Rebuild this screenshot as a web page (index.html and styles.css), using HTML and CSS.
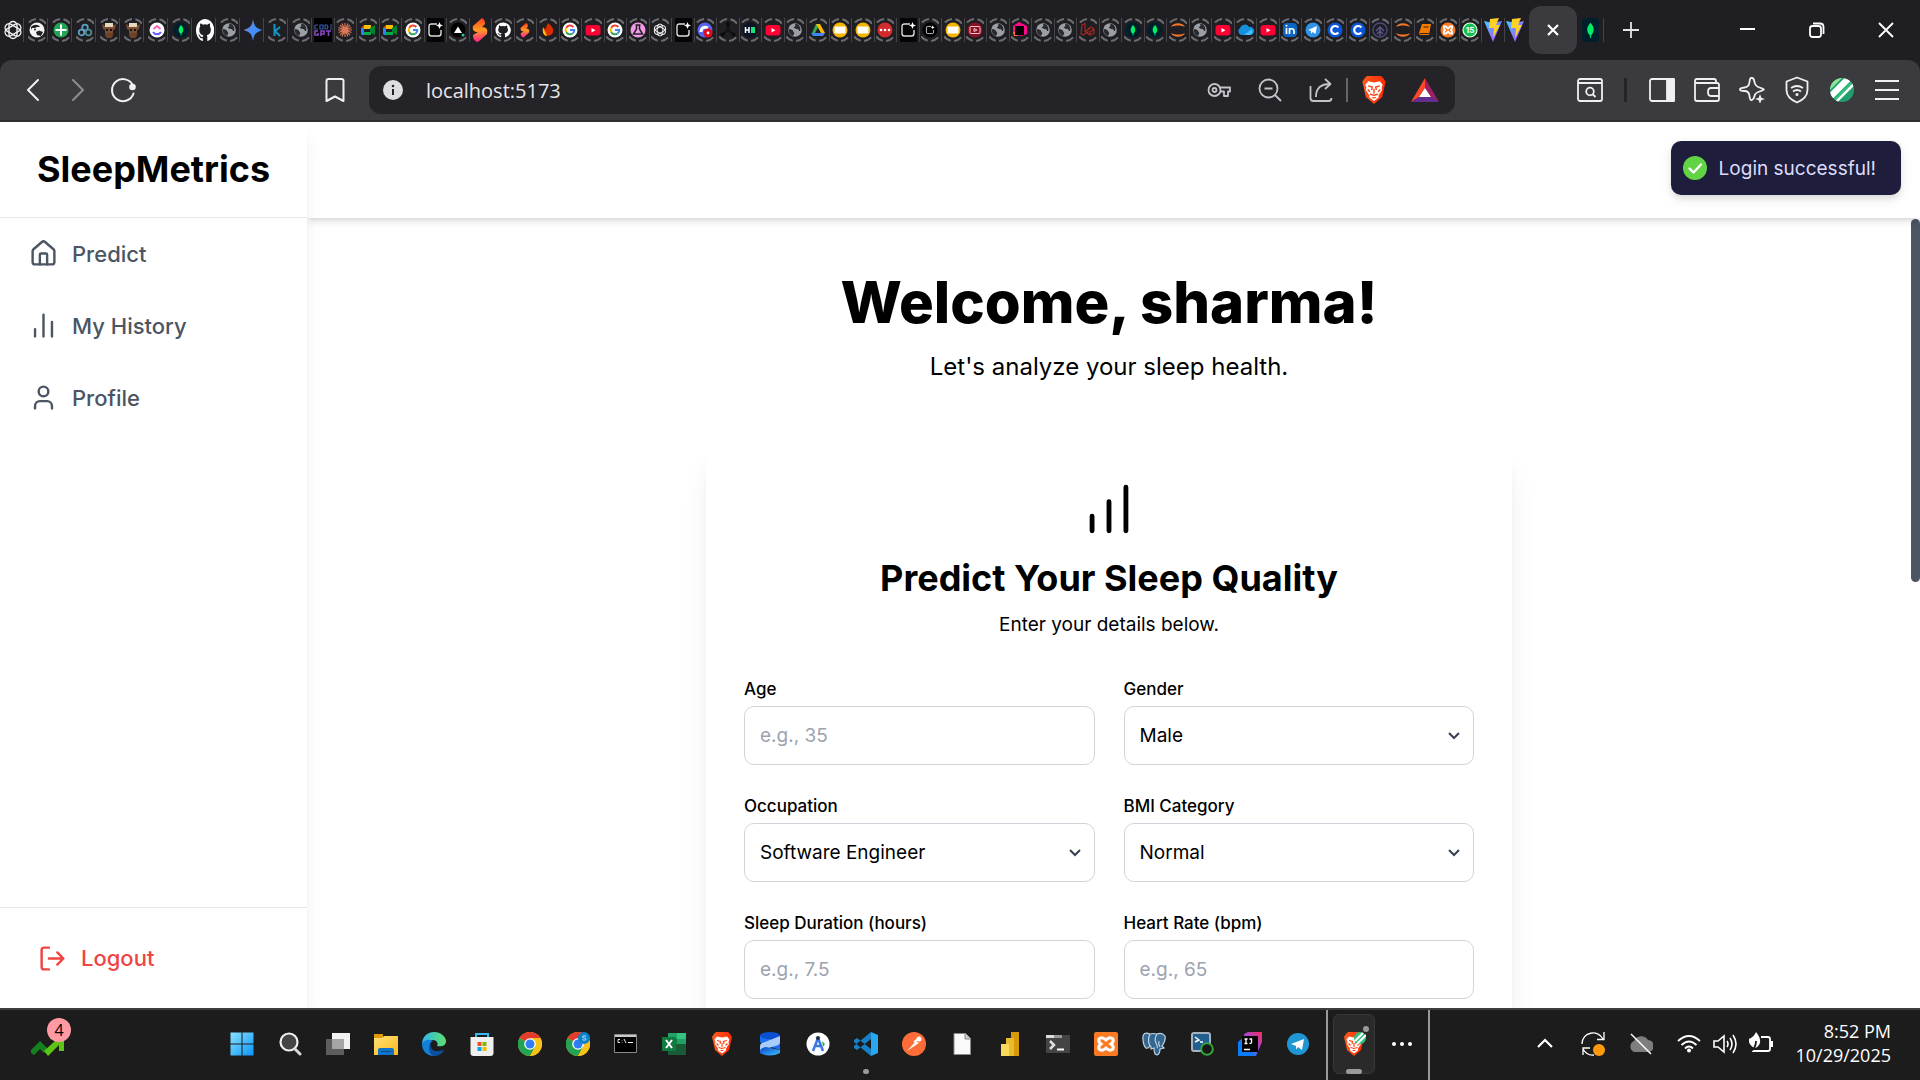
FILE: index.html
```html
<!DOCTYPE html>
<html lang="en">
<head>
<meta charset="utf-8">
<meta name="viewport" content="width=device-width, initial-scale=1">
<title>SleepMetrics</title>
<link rel="stylesheet" href="styles.css">
</head>
<body>
<!-- Shared favicon shapes, drawn around the centre (9,12) -->
<svg class="sprite" aria-hidden="true">
  <defs>
    <linearGradient id="hot" x1="0" y1="0" x2="0" y2="1"><stop offset="0" stop-color="#ff3d1f"/><stop offset=".5" stop-color="#ff9a1f"/><stop offset="1" stop-color="#ff1f8f"/></linearGradient>
    <linearGradient id="gem" x1="0" y1="0" x2="1" y2="1"><stop offset="0" stop-color="#f04a3c"/><stop offset=".4" stop-color="#4c8df6"/><stop offset=".7" stop-color="#3f8cf5"/><stop offset="1" stop-color="#25b35a"/></linearGradient>
    <linearGradient id="viteg" x1="0" y1="0" x2="1" y2="1"><stop offset="0" stop-color="#41d1ff"/><stop offset="1" stop-color="#bd34fe"/></linearGradient>
    <linearGradient id="lion" x1="0" y1="0" x2="1" y2="0"><stop offset="0" stop-color="#ff5a1f"/><stop offset="1" stop-color="#ff2a00"/></linearGradient>
    <linearGradient id="win" x1="0" y1="0" x2="1" y2="1"><stop offset="0" stop-color="#8be3ff"/><stop offset="1" stop-color="#0a94f7"/></linearGradient>
    <linearGradient id="fold" x1="0" y1="0" x2="1" y2="1"><stop offset="0" stop-color="#ffe07a"/><stop offset="1" stop-color="#fbb917"/></linearGradient>
    <linearGradient id="edg" x1="0" y1="0" x2="1" y2="0"><stop offset="0" stop-color="#2cb8f0"/><stop offset="1" stop-color="#5fe06a"/></linearGradient>
    <linearGradient id="jb" x1="0" y1="1" x2="1" y2="0"><stop offset=".3" stop-color="#087cfa"/><stop offset=".6" stop-color="#a04ad0"/><stop offset="1" stop-color="#fe2857"/></linearGradient>
    <linearGradient id="dbg" x1="0" y1="0" x2="1" y2="1"><stop offset="0" stop-color="#0a45c9"/><stop offset="1" stop-color="#3fc0ff"/></linearGradient>

    <circle id="ring" cx="9" cy="12" r="11" fill="none" stroke="#6d6d70" stroke-width="2" stroke-dasharray="8 3.5" stroke-dashoffset="15"/>
    <g id="knot" fill="none" stroke="#f2f2f2" stroke-width="1.400"><rect x="5" y="3.500" width="8" height="17" rx="4"/><rect x="5" y="3.500" width="8" height="17" rx="4" transform="rotate(60 9 12)"/><rect x="5" y="3.500" width="8" height="17" rx="4" transform="rotate(120 9 12)"/></g>
    <path id="cat" d="M9 0C4 0 0 4 0 9c0 4 2.600 7.400 6.200 8.600.4.100.6-.2.600-.5v-1.700c-2.500.5-3.100-1.100-3.100-1.100-.4-1-1-1.300-1-1.300-.8-.6.100-.6.100-.6.900.1 1.400.9 1.400.9.800 1.400 2.100 1 2.600.8.100-.6.300-1 .6-1.200-2-.2-4.100-1-4.100-4.500 0-1 .4-1.800.9-2.400-.1-.3-.4-1.200.1-2.400 0 0 .8-.3 2.500.9a8.600 8.600 0 0 1 4.500 0c1.700-1.200 2.500-.9 2.500-.9.500 1.200.2 2.100.1 2.400.6.600.9 1.400.9 2.400 0 3.500-2.100 4.200-4.100 4.500.3.300.6.800.6 1.700v2.500c0 .3.200.6.600.5A9 9 0 0 0 9 0z" fill="#fff"/>
    <path id="leaf" d="M0-6C3-3 4 1 .5 4.500V6.500h-1V4.500C-4 1-3-3 0-6z" fill="#00ed64"/>
    <g id="t-openai"><use href="#knot"/></g>
    <g id="t-openai2"><use href="#ring"/><g transform="translate(2.700 3.600) scale(.7)"><use href="#knot"/></g></g>
    <g id="t-beard"><use href="#ring"/><circle cx="9" cy="12" r="7.500" fill="#f4f4f4"/><path d="M3 9c3-3 7-3 9 0l-3 0-2 1-3 0-1 2zM8 14l3-1.500 4 1.500-2 4-4-1z" fill="#222"/><circle cx="7" cy="11.500" r="1" fill="#222"/></g>
    <g id="t-sheet"><use href="#ring"/><circle cx="9" cy="12" r="7.500" fill="#23a455"/><path d="M9 6.500v11M3.500 12h11" stroke="#fff" stroke-width="2"/></g>
    <g id="t-tref"><use href="#ring"/><g fill="none" stroke="#5f9fc0" stroke-width="1.800"><circle cx="9" cy="9.500" r="2.800"/><circle cx="5.500" cy="14.500" r="2.800"/><circle cx="12.500" cy="14.500" r="2.800" stroke="#4d8b93"/></g></g>
    <g id="t-bull"><use href="#ring"/><path d="M2 6l4 2h6l4-2-1 5-2 1v5l-2 3H7l-2-3v-5l-2-1z" fill="#7a4f32"/><path d="M5 5h8v4H5z" fill="#e8d9be"/><path d="M5 15h8v3l-4 2-4-2z" fill="#6b4128"/><path d="M6 11h2v2H6zM10 11h2v2h-2z" fill="#1b1410"/></g>
    <g id="t-click"><use href="#ring"/><circle cx="9" cy="12" r="7.500" fill="#fff"/><path d="M5.500 11L9 8l3.500 3" fill="none" stroke="#ff5fab" stroke-width="2"/><path d="M5 14c2 3 6 3 8 0" fill="none" stroke="#6a5cff" stroke-width="2"/></g>
    <g id="t-mongo"><use href="#ring"/><circle cx="9" cy="12" r="7.500" fill="#001e2b"/><use href="#leaf" transform="translate(9 12) scale(.85)"/></g>
    <g id="t-github"><g transform="translate(0 1) scale(1 1.250)"><use href="#cat"/></g></g>
    <g id="t-github2"><use href="#ring"/><g transform="translate(1.500 4.500) scale(.84)"><use href="#cat"/></g></g>
    <g id="t-globe"><use href="#ring"/><circle cx="9" cy="12" r="6.800" fill="#9aa0a6"/><path d="M3 11c2 0 4 1 4 2s2 1 1 3l-1 2c-3-1-5-4-4-7zM9 6c1 1 0 3-1 3s1 2 3 2 1 2 3 2c1-2 0-6-3-7z" fill="#2b2a2f"/></g>
    <path id="t-gem" d="M9 1c1 7 3 9 9.500 11C12 14 10 16 9 23 8 16 6 14-.5 12 6 10 8 8 9 1z" fill="url(#gem)"/>
    <g id="t-k"><use href="#ring"/><path d="M6.500 6v12M12 9l-5 4 5 5" fill="none" stroke="#1496c4" stroke-width="2"/></g>
    <g id="t-gpt"><path d="M0 0h18v24H0z" fill="#000"/><path d="M1 7h3M1 7v4h3M6 7h3v4H6zM11 7h2l1 2-1 2h-2zM16 7h2M16 9h2M16 11h2" fill="none" stroke="#3a5aa5" stroke-width="1.200"/><path d="M4 13H1v4h3v-2M7 18v-5h3v3H7M12 13h5M14.500 13v5" fill="none" stroke="#8b45c4" stroke-width="1.600"/></g>
    <g id="t-claude"><use href="#ring"/><path d="M9 5v14M2 12h14M4 7l10 10M14 7L4 17M6 5.500l6 13M12 5.500l-6 13M2.500 9.500l13 5M15.500 9.500l-13 5" stroke="#d97757" stroke-width="1.200"/></g>
    <g id="t-meet"><use href="#ring"/><path d="M5 7h7v4H5z" fill="#fbbc04"/><path d="M2 10l3-3v4H2z" fill="#ea4335"/><path d="M2 10h3v7H3l-1-1z" fill="#2684fc"/><path d="M5 14h7v3H5z" fill="#00ac47"/><path d="M11 10l5-3v10l-5-3z" fill="#00832d"/></g>
    <g id="t-google"><use href="#ring"/><circle cx="9" cy="12" r="7.500" fill="#fff"/><g fill="none" stroke-width="2"><path d="M5.300 9.800A4.300 4.300 0 0 1 12.300 9" stroke="#ea4335"/><path d="M5.300 14.200a4.300 4.300 0 0 1 0-4.400" stroke="#fbbc05"/><path d="M5.300 14.200a4.300 4.300 0 0 0 6.300 1.300" stroke="#34a853"/><path d="M9 12h4.300a4 4 0 0 1-1.700 3.500" stroke="#4285f4"/></g></g>
    <g id="spark"><path d="M11 6H5.500Q3 6 3 8.500v7Q3 18 5.500 18h7q2.500 0 2.500-2.500V12" fill="none" stroke="#ddd" stroke-width="1.400"/><path d="M13.500 4l1 2.500L17 7.500l-2.500 1-1 2.500-1-2.500-2.500-1 2.500-1z" fill="#fff"/></g>
    <g id="t-spark"><path d="M1 0h17v24H1z" fill="#050505"/><use href="#spark"/></g>
    <g id="t-spark2"><use href="#ring"/><circle cx="9" cy="12" r="7.500" fill="#000"/><g transform="translate(3.600 4.800) scale(.6)"><use href="#spark"/></g></g>
    <g id="t-vercel"><use href="#ring"/><circle cx="9" cy="12" r="7.500" fill="#000"/><path d="M9 8.500l4 6.500H5z" fill="#fff"/><circle cx="14" cy="17" r="1.500" fill="#2bc4a0"/></g>
    <path id="t-s" d="M11 0L2 8c-1 4 1 6 5 6l-5 3c0 4 2 7 5 7l9-8c1-4 0-7-5-7l3-3c0-3-1-5-3-6z" fill="url(#hot)"/>
    <g id="t-s2"><use href="#ring"/><g transform="translate(3.500 5) scale(.6)"><use href="#t-s"/></g></g>
    <g id="t-flame"><use href="#ring"/><path d="M9 5c4 3 6 6 5 9-1 5-9 5-10 0 0-2 0-3 1-4l2 1c0-2 1-4 2-6z" fill="#dd2c00"/><path d="M4 9l4 9c-3 0-5-3-4-9z" fill="#ffc400"/></g>
    <g id="t-yt"><use href="#ring"/><rect x="1.500" y="7" width="15" height="10.500" rx="3" fill="#ff0033"/><path d="M7.500 10l4 2.200-4 2.300z" fill="#fff"/></g>
    <g id="t-flask"><use href="#ring"/><circle cx="9" cy="12" r="7.500" fill="#f59ae8"/><path d="M6.500 7h5M7.500 7v4L4.500 16h9l-3-5V7" fill="none" stroke="#222" stroke-width="1.500"/></g>
    <g id="t-disc"><use href="#ring"/><circle cx="9" cy="12" r="7.500" fill="#5865f2"/><path d="M5 14c0-4 3-6 7-4" fill="none" stroke="#fff" stroke-width="3"/><circle cx="12" cy="15" r="4.500" fill="#e00b1c"/><circle cx="12" cy="15" r="1.400" fill="#fff"/></g>
    <g id="t-net"><use href="#ring"/><path d="M9 5v7L3 17M9 12l6 5" stroke="#0b0b0c" fill="none" stroke-width="1.500"/><circle cx="9" cy="6" r="2" fill="#0b0b0c"/><circle cx="3.500" cy="16.500" r="2" fill="#0b0b0c"/><circle cx="14.500" cy="16.500" r="2" fill="#0b0b0c"/></g>
    <g id="t-he"><use href="#ring"/><circle cx="9" cy="12" r="7.500" fill="#0a1428"/><path d="M4.500 9v6M8 9v6M4 12h4" stroke="#fff" stroke-width="1.500"/><path d="M10 9h4v6h-4z" fill="#1be27a"/></g>
    <g id="t-drive"><use href="#ring"/><path d="M7 6h4l-5 9-3 0z" fill="#34a853"/><path d="M7 6h4l5 9h-4z" fill="#fbbc04"/><path d="M2 15h14l-2 3H4z" fill="#4285f4"/></g>
    <g id="t-slides"><use href="#ring"/><circle cx="9" cy="12" r="7.500" fill="#f4b400"/><rect x="3.500" y="8.500" width="11" height="7" rx="1" fill="#fff"/></g>
    <g id="t-dots"><use href="#ring"/><circle cx="9" cy="12" r="7.500" fill="#d32b2b"/><circle cx="5" cy="12" r="1.300" fill="#fff"/><circle cx="9" cy="12" r="1.300" fill="#fff"/><circle cx="13" cy="12" r="1.300" fill="#fff"/></g>
    <g id="t-rplay"><use href="#ring"/><circle cx="9" cy="12" r="7.500" fill="#8c0f24"/><rect x="4" y="8.500" width="10" height="7" rx="1" fill="none" stroke="#f5c9cf"/><path d="M8 10.500l3 1.500-3 1.500z" fill="none" stroke="#f5c9cf"/></g>
    <g id="t-jb"><use href="#ring"/><path d="M2 8l6-4 8 4v8l-6 2-8-2z" fill="#ff0a8a"/><path d="M2 14h5v4H3z" fill="#ff6a2b"/><path d="M4 8h9v9H4z" fill="#000"/></g>
    <g id="t-laravel"><use href="#ring"/><path d="M3 7l3-1.500v8L11 17l4-2v-4l-3-2-3 2v3l-5 3-2-1zM6 13.500l5-3M11 17v-3l4-3" fill="none" stroke="#a8261f" stroke-width="1.200"/></g>
    <g id="t-jup"><use href="#ring"/><path d="M2 9c2-5 12-5 14 0-4-2-10-2-14 0zM2 15c2 5 12 5 14 0-4 2-10 2-14 0z" fill="#f37726"/></g>
    <g id="t-cloud"><use href="#ring"/><path d="M5 17a4 4 0 0 1-1-7 5 5 0 0 1 9-1 4 4 0 0 1 2 8z" fill="#1490df"/><path d="M8 17l8-6c1 3 0 6-3 6z" fill="#48c0ff"/></g>
    <g id="t-in"><use href="#ring"/><rect x="2" y="5" width="14" height="14" rx="4" fill="#0a66c2"/><path d="M5.500 10v6M8.500 16v-6M8.500 13c0-3 4.500-3 4.500 0v3" fill="none" stroke="#fff" stroke-width="1.700"/><circle cx="5.500" cy="7.800" r="1" fill="#fff"/></g>
    <g id="t-tg"><use href="#ring"/><circle cx="9" cy="12" r="7.500" fill="#2f93e8"/><path d="M4 12l9-4-1.500 8-3-2-1.500 2v-3z" fill="#fff"/></g>
    <g id="t-c"><use href="#ring"/><circle cx="9" cy="12" r="7.500" fill="#0a56d6"/><path d="M12.300 9.500a4 4 0 1 0 0 5" fill="none" stroke="#fff" stroke-width="2.200"/></g>
    <g id="t-tree"><use href="#ring"/><circle cx="9" cy="12" r="7" fill="none" stroke="#4a4a7a" stroke-width="1.400"/><path d="M9 18v-9M5 13l4-4 4 4M6 16l3-3 3 3" fill="none" stroke="#58588f" stroke-width="1.400"/></g>
    <g id="t-book"><use href="#ring"/><path d="M6 6h9l-2 11H4L3 15z" fill="#f57c00"/><path d="M7.500 9h5M4 15.500h9" stroke="#3a2208" stroke-width="1.200"/></g>
    <g id="t-xampp"><use href="#ring"/><circle cx="9" cy="12" r="7.500" fill="#fb7a24"/><path d="M5 8.500h2l2 2 2-2h2v2l-1 1.500 1 1.500v2h-2l-2-2-2 2H5v-2L6 12l-1-1.500z" fill="none" stroke="#fff" stroke-width="1.800"/></g>
    <g id="t-wa"><use href="#ring"/><circle cx="9" cy="12" r="7" fill="#10c050" stroke="#e8ffe8" stroke-width="1.200"/><text x="9" y="15" class="mini-num">15</text></g>
    <g id="t-vite"><path d="M0 3l9 2 9-2-9 21z" fill="url(#viteg)"/><path d="M6 1l9-1-3 7h4L9 20l1-10H5z" fill="#ffd028"/></g>
    <g id="shield"><path d="M6 0h12l2 2 2 3-1 4-2 9-7 6-7-6-2-9-1-4 2-3z" fill="url(#lion)"/><path d="M7 4.500l5 1 5-1 2.500 3-1 2.500.5 2-3 4.500 0 2-4 3-4-3 0-2-3-4.500.5-2-1-2.500z" fill="#fff"/><path d="M7 8.500l3.500 1-.5 2.500M17 8.500l-3.500 1 .5 2.500M12 11v4M8.500 15.500l3.500 1 3.500-1M10.500 18.500h3M6.500 11.500l2 2M17.500 11.500l-2 2" fill="none" stroke="#ff4410" stroke-width="1.200"/></g>
    <g id="chrome"><circle cx="12" cy="12" r="12" fill="#fbc116"/><path d="M12 12L1.600 6A12 12 0 0 1 22.400 6z" fill="#e33b2e"/><path d="M12 12L1.600 6A12 12 0 0 0 12 24l5-9z" fill="#23a455"/><path d="M12 6h10.400L17 15z" fill="#fbc116"/><path d="M12 24l5.200-9L22.400 6A12 12 0 0 1 12 24z" fill="#fbc116"/><circle cx="12" cy="12" r="5.800" fill="#fff"/><circle cx="12" cy="12" r="4.500" fill="#2f7df0"/></g>
  </defs>
</svg>

<header class="browser">
  <div class="tabstrip">
    <div class="tabs pinned">
      <button class="tab" aria-label="Tab 1"><svg><use href="#t-openai"/></svg></button>
      <button class="tab" aria-label="Tab 2"><svg><use href="#t-beard"/></svg></button>
      <button class="tab" aria-label="Tab 3"><svg><use href="#t-sheet"/></svg></button>
      <button class="tab" aria-label="Tab 4"><svg><use href="#t-tref"/></svg></button>
      <button class="tab" aria-label="Tab 5"><svg><use href="#t-bull"/></svg></button>
      <button class="tab" aria-label="Tab 6"><svg><use href="#t-bull"/></svg></button>
      <button class="tab" aria-label="Tab 7"><svg><use href="#t-click"/></svg></button>
      <button class="tab" aria-label="Tab 8"><svg><use href="#t-mongo"/></svg></button>
      <button class="tab" aria-label="Tab 9"><svg><use href="#t-github"/></svg></button>
      <button class="tab" aria-label="Tab 10"><svg><use href="#t-globe"/></svg></button>
      <button class="tab" aria-label="Tab 11"><svg><use href="#t-gem"/></svg></button>
      <button class="tab" aria-label="Tab 12"><svg><use href="#t-k"/></svg></button>
      <button class="tab" aria-label="Tab 13"><svg><use href="#t-globe"/></svg></button>
    </div>
    <div class="tabs fluid">
      <button class="tab" aria-label="Tab 14"><svg><use href="#t-gpt"/></svg></button>
      <button class="tab" aria-label="Tab 15"><svg><use href="#t-claude"/></svg></button>
      <button class="tab" aria-label="Tab 16"><svg><use href="#t-meet"/></svg></button>
      <button class="tab" aria-label="Tab 17"><svg><use href="#t-meet"/></svg></button>
      <button class="tab" aria-label="Tab 18"><svg><use href="#t-google"/></svg></button>
      <button class="tab" aria-label="Tab 19"><svg><use href="#t-spark"/></svg></button>
      <button class="tab" aria-label="Tab 20"><svg><use href="#t-vercel"/></svg></button>
      <button class="tab" aria-label="Tab 21"><svg><use href="#t-s"/></svg></button>
      <button class="tab" aria-label="Tab 22"><svg><use href="#t-github2"/></svg></button>
      <button class="tab" aria-label="Tab 23"><svg><use href="#t-s2"/></svg></button>
      <button class="tab" aria-label="Tab 24"><svg><use href="#t-flame"/></svg></button>
      <button class="tab" aria-label="Tab 25"><svg><use href="#t-google"/></svg></button>
      <button class="tab" aria-label="Tab 26"><svg><use href="#t-yt"/></svg></button>
      <button class="tab" aria-label="Tab 27"><svg><use href="#t-google"/></svg></button>
      <button class="tab" aria-label="Tab 28"><svg><use href="#t-flask"/></svg></button>
      <button class="tab" aria-label="Tab 29"><svg><use href="#t-openai2"/></svg></button>
      <button class="tab" aria-label="Tab 30"><svg><use href="#t-spark"/></svg></button>
      <button class="tab" aria-label="Tab 31"><svg><use href="#t-disc"/></svg></button>
      <button class="tab" aria-label="Tab 32"><svg><use href="#t-net"/></svg></button>
      <button class="tab" aria-label="Tab 33"><svg><use href="#t-he"/></svg></button>
      <button class="tab" aria-label="Tab 34"><svg><use href="#t-yt"/></svg></button>
      <button class="tab" aria-label="Tab 35"><svg><use href="#t-globe"/></svg></button>
      <button class="tab" aria-label="Tab 36"><svg><use href="#t-drive"/></svg></button>
      <button class="tab" aria-label="Tab 37"><svg><use href="#t-slides"/></svg></button>
      <button class="tab" aria-label="Tab 38"><svg><use href="#t-slides"/></svg></button>
      <button class="tab" aria-label="Tab 39"><svg><use href="#t-dots"/></svg></button>
      <button class="tab" aria-label="Tab 40"><svg><use href="#t-spark"/></svg></button>
      <button class="tab" aria-label="Tab 41"><svg><use href="#t-spark2"/></svg></button>
      <button class="tab" aria-label="Tab 42"><svg><use href="#t-slides"/></svg></button>
      <button class="tab" aria-label="Tab 43"><svg><use href="#t-rplay"/></svg></button>
      <button class="tab" aria-label="Tab 44"><svg><use href="#t-globe"/></svg></button>
      <button class="tab" aria-label="Tab 45"><svg><use href="#t-jb"/></svg></button>
      <button class="tab" aria-label="Tab 46"><svg><use href="#t-globe"/></svg></button>
      <button class="tab" aria-label="Tab 47"><svg><use href="#t-globe"/></svg></button>
      <button class="tab" aria-label="Tab 48"><svg><use href="#t-laravel"/></svg></button>
      <button class="tab" aria-label="Tab 49"><svg><use href="#t-globe"/></svg></button>
      <button class="tab" aria-label="Tab 50"><svg><use href="#t-mongo"/></svg></button>
      <button class="tab" aria-label="Tab 51"><svg><use href="#t-mongo"/></svg></button>
      <button class="tab" aria-label="Tab 52"><svg><use href="#t-jup"/></svg></button>
      <button class="tab" aria-label="Tab 53"><svg><use href="#t-globe"/></svg></button>
      <button class="tab" aria-label="Tab 54"><svg><use href="#t-yt"/></svg></button>
      <button class="tab" aria-label="Tab 55"><svg><use href="#t-cloud"/></svg></button>
      <button class="tab" aria-label="Tab 56"><svg><use href="#t-yt"/></svg></button>
      <button class="tab" aria-label="Tab 57"><svg><use href="#t-in"/></svg></button>
      <button class="tab" aria-label="Tab 58"><svg><use href="#t-tg"/></svg></button>
      <button class="tab" aria-label="Tab 59"><svg><use href="#t-c"/></svg></button>
      <button class="tab" aria-label="Tab 60"><svg><use href="#t-c"/></svg></button>
      <button class="tab" aria-label="Tab 61"><svg><use href="#t-tree"/></svg></button>
      <button class="tab" aria-label="Tab 62"><svg><use href="#t-jup"/></svg></button>
      <button class="tab" aria-label="Tab 63"><svg><use href="#t-book"/></svg></button>
      <button class="tab" aria-label="Tab 64"><svg><use href="#t-xampp"/></svg></button>
      <button class="tab" aria-label="Tab 65"><svg><use href="#t-wa"/></svg></button>
      <button class="tab" aria-label="Tab 66"><svg><use href="#t-vite"/></svg></button>
      <button class="tab last" aria-label="Tab 67"><svg><use href="#t-vite"/></svg></button>
    </div>
    <button class="tab-active" aria-label="Close tab"><svg width="14" height="14" viewBox="0 0 14 14"><path d="M2 2l10 10M12 2L2 12" stroke="#fff" stroke-width="2.200"/></svg></button>
    <button class="tab tab-end" aria-label="Tab 69"><svg><rect y="0" x="1" width="17" height="24" rx="4" fill="#001e2b"/><use href="#leaf" transform="translate(9.500 12) scale(1.200)"/></svg></button>
    <button class="new-tab" aria-label="New tab"><svg width="16" height="16" viewBox="0 0 16 16"><path d="M8 0v16M0 8h16" stroke="#e4e4e6" stroke-width="1.800"/></svg></button>
    <div class="window-buttons">
      <button aria-label="Minimize"><svg width="16" height="16" viewBox="0 0 16 16"><path d="M0 7h15" stroke="#fff" stroke-width="2"/></svg></button>
      <button aria-label="Restore"><svg width="16" height="16" viewBox="0 0 16 16" fill="none" stroke="#fff" stroke-width="1.800"><rect x="1" y="4" width="11" height="11" rx="2.500"/><path d="M4 1.500h7q3.500 0 3.500 3.500v7"/></svg></button>
      <button aria-label="Close"><svg width="16" height="16" viewBox="0 0 16 16"><path d="M1 1l14 14M15 1L1 15" stroke="#fff" stroke-width="1.900"/></svg></button>
    </div>
  </div>

  <div class="toolbar">
    <button class="tool" aria-label="Back"><svg width="28" height="28" viewBox="0 0 28 28"><path d="M19 4L9 14l10 10" class="line"/></svg></button>
    <button class="tool dim" aria-label="Forward"><svg width="28" height="28" viewBox="0 0 28 28"><path d="M9 4l10 10L9 24" class="line"/></svg></button>
    <button class="tool" aria-label="Reload"><svg width="28" height="28" viewBox="0 0 28 28"><path d="M24 9.500a11 11 0 1 0 .5 8" class="line"/><circle cx="23.500" cy="11" r="3.300" fill="#f0f0f2"/></svg></button>
    <button class="tool bookmark" aria-label="Bookmark"><svg width="28" height="28" viewBox="0 0 28 28"><path d="M5.500 25V5q0-2 2-2h13q2 0 2 2v20L14 20.500z" class="line"/></svg></button>
    <div class="address">
      <svg width="20" height="20" viewBox="0 0 20 20"><circle cx="10" cy="10" r="10" fill="#dedde2"/><path d="M10 9v6" stroke="#242328" stroke-width="2"/><circle cx="10" cy="6" r="1.300" fill="#242328"/></svg>
      <input class="url" type="text" aria-label="Address" value="localhost:5173">
      <button class="addr-tool" aria-label="Passwords"><svg width="24" height="24" viewBox="0 0 24 24" class="soft"><circle cx="7.500" cy="12" r="6"/><circle cx="7.500" cy="12" r="2"/><path d="M12.500 9.500H23v4h-2V18h-4v-4.500h-4"/></svg></button>
      <button class="addr-tool" aria-label="Zoom"><svg width="24" height="24" viewBox="0 0 24 24" class="soft"><circle cx="10.500" cy="10.500" r="9"/><path d="M17 17l6 6M6.500 10.500h8"/></svg></button>
      <button class="addr-tool" aria-label="Share"><svg width="24" height="24" viewBox="0 0 24 24" class="soft"><path d="M1.500 8v12q0 3 3 3h15q3 0 3-3M7 19C7 10 12 6 21 6M16 1l5.500 5-5.500 5"/></svg></button>
      <span class="addr-rule"></span>
      <button class="addr-tool" aria-label="Shields"><svg width="28" height="28" viewBox="0 0 24 24"><use href="#shield"/></svg></button>
      <button class="addr-tool" aria-label="Rewards"><svg width="28" height="26" viewBox="0 0 28 26"><path d="M14 1L0 25l8-5 6-9z" fill="#ff4724"/><path d="M14 1l14 24-8-5-6-9z" fill="#9e1f63"/><path d="M0 25h28l-7-5H8z" fill="#662d91"/><path d="M14 11l6 9H8z" fill="#fff"/></svg></button>
    </div>
    <div class="side-tools">
      <button class="tool" aria-label="Search tabs"><svg width="26" height="26" viewBox="0 0 26 26" class="white"><rect x="1" y="2" width="24" height="22" rx="2"/><path d="M1 6h24M15.500 17l3 3"/><circle cx="13" cy="14.500" r="3.800"/></svg></button>
      <span class="tool-rule"></span>
      <button class="tool" aria-label="Sidebar"><svg width="26" height="26" viewBox="0 0 26 26" class="white"><rect x="1" y="2" width="24" height="22" rx="2"/><path d="M18 2h7v22h-7z" fill="#f0f0f2"/></svg></button>
      <button class="tool" aria-label="Wallet"><svg width="26" height="26" viewBox="0 0 26 26" class="white"><path d="M22 6V4q0-2-2-2H3Q1 2 1 4v18q0 2 2 2h20q2 0 2-2V8q0-2-2-2H1M25 11h-8q-3 0-3 4t3 4h8"/></svg></button>
      <button class="tool" aria-label="Assistant"><svg width="26" height="26" viewBox="0 0 26 26" class="white"><path d="M12 2q2 0 2.500 4t5 5.500T24 13.500t-4.500 2T14.500 20 12 24t-2.500-4-5-5T0 13.500t4.500-2 5-5.500T12 2z" transform="translate(1 -1)"/><path d="M21 17l1.300 3.700L26 22l-3.700 1.300L21 27l-1.300-3.700L16 22l3.700-1.300z" fill="#f0f0f2" stroke="none"/></svg></button>
      <button class="tool" aria-label="VPN"><svg width="26" height="28" viewBox="0 0 26 28" class="white"><path d="M13 1.500l10.500 4V14q0 8-10.500 12.500Q2.500 22 2.500 14V5.500zM7 12q6-4 12 0M9 15.500q4-3 8 0"/><circle cx="13" cy="18.500" r="1.500" fill="#f0f0f2" stroke="none"/></svg></button>
      <button class="tool" aria-label="Profile"><svg width="24" height="24" viewBox="0 0 24 24"><clipPath id="disc"><circle cx="12" cy="12" r="12"/></clipPath><g clip-path="url(#disc)"><path d="M0 0h24v24H0z" fill="#1f9f6e"/><path d="M0 0h12L0 12z" fill="#8fe39a"/><path d="M0 18L18 0M-2 22L22-2" stroke="#fff" stroke-width="5"/><path d="M6 24L24 6" stroke="#fff" stroke-width="2.500"/><path d="M4 22L22 4" stroke="#2fc47c" stroke-width="2"/></g></svg></button>
      <button class="tool" aria-label="Menu"><svg width="26" height="26" viewBox="0 0 26 26" class="white"><path d="M1 4h24M1 13h24M1 22h24"/></svg></button>
    </div>
  </div>
</header>

<div class="app">
  <aside class="sidebar">
    <div class="brand">SleepMetrics</div>
    <nav class="menu">
      <a href="#predict"><svg class="icon" viewBox="0 0 24 24"><path d="M15 21v-8a1 1 0 0 0-1-1h-4a1 1 0 0 0-1 1v8"/><path d="M3 10a2 2 0 0 1 .709-1.528l7-5.999a2 2 0 0 1 2.582 0l7 5.999A2 2 0 0 1 21 10v9a2 2 0 0 1-2 2H5a2 2 0 0 1-2-2z"/></svg>Predict</a>
      <a href="#history"><svg class="icon" viewBox="0 0 24 24"><path d="M5 21v-6M12 21V3M19 21V9"/></svg>My History</a>
      <a href="#profile"><svg class="icon" viewBox="0 0 24 24"><path d="M19 21v-2a4 4 0 0 0-4-4H9a4 4 0 0 0-4 4v2"/><circle cx="12" cy="7" r="4"/></svg>Profile</a>
    </nav>
    <div class="session">
      <button class="logout"><svg class="icon" viewBox="0 0 24 24"><path d="m16 17 5-5-5-5M21 12H9M9 21H5a2 2 0 0 1-2-2V5a2 2 0 0 1 2-2h4"/></svg>Logout</button>
    </div>
  </aside>
  <div class="content">
    <div class="topbar"></div>
    <div class="scroller">
      <main class="page">
        <h1>Welcome, sharma!</h1>
        <p class="lead">Let's analyze your sleep health.</p>
        <form class="card" id="predict">
          <svg class="card-icon" viewBox="0 0 24 24"><path d="M5 21v-6M12 21V9M19 21V3"/></svg>
          <h2>Predict Your Sleep Quality</h2>
          <p class="hint">Enter your details below.</p>
          <div class="fields">
            <div class="field"><label for="age">Age</label><input id="age" type="text" placeholder="e.g., 35"></div>
            <div class="field"><label for="gender">Gender</label><select id="gender"><option>Male</option><option>Female</option></select></div>
            <div class="field"><label for="job">Occupation</label><select id="job"><option>Software Engineer</option></select></div>
            <div class="field"><label for="bmi">BMI Category</label><select id="bmi"><option>Normal</option></select></div>
            <div class="field"><label for="sleep">Sleep Duration (hours)</label><input id="sleep" type="text" placeholder="e.g., 7.5"></div>
            <div class="field"><label for="heart">Heart Rate (bpm)</label><input id="heart" type="text" placeholder="e.g., 65"></div>
          </div>
        </form>
      </main>
      <div class="scrollbar"><div class="thumb"></div></div>
    </div>
  </div>
  <div class="toast" role="status"><svg width="24" height="24" viewBox="0 0 24 24"><circle cx="12" cy="12" r="12" fill="#61d345"/><path d="M6.500 12.500l4 4 7.500-8" fill="none" stroke="#fff" stroke-width="2.400" stroke-linecap="round" stroke-linejoin="round"/></svg>Login successful!</div>
</div>

<footer class="taskbar">
  <button class="widget" aria-label="Widgets"><svg width="34" height="20" viewBox="0 0 34 20"><path d="M0 13l9-9 8 8-4 4-4-4-6 6-3-2z" fill="#15801e"/><path d="M13 14L25 3l-6-1V0h14v14h-5V8L17 19z" fill="#5cc414"/></svg><span class="badge">4</span></button>
  <div class="apps">
    <button aria-label="Start"><svg viewBox="0 0 24 24"><path d="M.5.500h11v11H.5zM12.500.500h11v11h-11zM.5 12.500h11v11H.5zM12.500 12.500h11v11h-11z" fill="url(#win)"/></svg></button>
    <button aria-label="Search"><svg viewBox="0 0 24 24"><circle cx="11" cy="10" r="8.500" fill="#454545" stroke="#f0f0f0" stroke-width="2.200"/><path d="M17 17l5 5" stroke="#d8d8d8" stroke-width="3" stroke-linecap="round"/></svg></button>
    <button aria-label="Task view"><svg viewBox="0 0 24 24"><path d="M6 1h18v16H6z" fill="#f2f2f2"/><path d="M0 7h18v16H0z" fill="#5d5d5d"/><path d="M6 7h12v10H6z" fill="#a5a5a5"/></svg></button>
    <button aria-label="Files"><svg viewBox="0 0 24 24"><path d="M0 2h9v5h15v16H0z" fill="#dd9b06"/><path d="M0 6h8l2-2h14v19H0z" fill="url(#fold)"/><path d="M4 23v-5q0-2 2-2h12q2 0 2 2v5z" fill="#0f74c8"/><path d="M7 19.500h10" stroke="#0a4b88"/></svg></button>
    <button aria-label="Edge"><svg viewBox="0 0 24 24"><path d="M0 13C0 5 5 0 12 0s12 5 12 9c0 5-5 6-9 5 2-3-1-6-4-6C5 8 1 10 0 13z" fill="url(#edg)"/><path d="M0 12c2-5 8-5 11-3-3 1-4 4-3 7 1 5 4 8 4 8C5 24 0 19 0 12z" fill="#1380dc"/><path d="M10 10c-3 3-1 10 6 9 3 0 6-2 6-1-2 4-6 6-10 6C7 23 5 14 10 10z" fill="#0d4f9e"/></svg></button>
    <button aria-label="Store"><svg viewBox="0 0 24 24"><path d="M6 6V2h12v4" fill="none" stroke="#35b8f1" stroke-width="2"/><path d="M.5 5h23v16q0 3-3 3h-17q-3 0-3-3z" fill="#efefef"/><path d="M7.500 10h4v4h-4z" fill="#f25022"/><path d="M12.500 10h4v4h-4z" fill="#7fba00"/><path d="M7.500 15h4v4h-4z" fill="#00a4ef"/><path d="M12.500 15h4v4h-4z" fill="#ffb900"/></svg></button>
    <button aria-label="Chrome"><svg viewBox="0 0 24 24"><use href="#chrome"/></svg></button>
    <button aria-label="Chrome, second profile"><svg viewBox="0 0 24 24"><use href="#chrome"/><circle cx="18" cy="6" r="6" fill="#0b83c9"/><path d="M20 4.500c-1-1-3.500-1-3.500.5s3.500.5 3.500 2-2.500 1.500-3.700.5" fill="none" stroke="#bfe4fa"/></svg></button>
    <button aria-label="Command prompt"><svg viewBox="0 0 24 24"><path d="M.5 2.500h22v18h-22z" fill="#000" stroke="#8a8a8a"/><path d="M1 3h21v2H1z" fill="#c9c9c9"/><path d="M6 7.500H4v3h2M8 8v.5M8 10v.5M10 7l2 4M14 10.500h5" stroke="#eee" fill="none"/></svg></button>
    <button aria-label="Excel"><svg viewBox="0 0 24 24"><path d="M6 1h18v22H6z" fill="#185c37"/><path d="M6 1h9v6H6zM15 7h9v5h-9z" fill="#21a366"/><path d="M15 1h9v6h-9z" fill="#33c481"/><path d="M6 7h9v5H6z" fill="#107c41"/><rect y="5" width="14" height="14" rx="1" fill="#107c41"/><path d="M4 8l6 8M10 8l-6 8" stroke="#fff" stroke-width="2"/></svg></button>
    <button aria-label="Brave"><svg viewBox="0 0 24 24"><use href="#shield"/></svg></button>
    <button aria-label="Database"><svg viewBox="0 0 24 24"><path d="M2 3v6q0 3 5 4l15 5v-6q0-2-5-3z" fill="#1a6ff0"/><ellipse cx="12" cy="3.500" rx="10" ry="3.500" fill="#0b50d0"/><path d="M22 4v6q0 3-5 4L2 19v-5q0-3 5-4z" fill="#a9ccff"/><path d="M2 19q0-3 6-4l14 3v3q-10 5-20 0z" fill="url(#dbg)"/></svg></button>
    <button aria-label="Android Studio"><svg viewBox="0 0 24 24"><circle cx="12" cy="12" r="11.500" fill="#fff"/><path d="M12 6l-5 13M12 6l5 13M8 14h8" fill="none" stroke="#3b78e7" stroke-width="2.500"/><circle cx="12" cy="6" r="2" fill="#202c3c"/><path d="M16 9l3 3-2 3z" fill="#34a853"/></svg></button>
    <button class="running" aria-label="VS Code"><svg viewBox="0 0 24 24"><path d="M17 0l7 3v18l-7 3z" fill="#2aa7f2"/><path d="M17 0v7L3 18 0 16v-2zM17 24v-7L3 6 0 8v2z" fill="#1681ca"/></svg></button>
    <button aria-label="Postman"><svg viewBox="0 0 24 24"><circle cx="12" cy="12" r="12" fill="#ff6c37"/><path d="M5 19l9-10 3 2z" fill="#fff"/><circle cx="17" cy="7" r="2.500" fill="#fff"/><path d="M12 10l4-3" stroke="#fff" stroke-width="2"/></svg></button>
    <button aria-label="Document"><svg viewBox="0 0 24 24"><path d="M4 1.500h11.500l5 5v16H4z" fill="#fafafa" stroke="#8a8a8a"/><path d="M15 1v6h6" fill="#ccc" stroke="#8a8a8a"/></svg></button>
    <button aria-label="Power BI"><svg viewBox="0 0 24 24"><path d="M13 0h8v24h-8z" fill="#d89a0c"/><path d="M8 6h8v18H8z" fill="#eabb2c"/><path d="M3 12h8v12H3z" fill="#f8d95c"/></svg></button>
    <button aria-label="Terminal"><svg viewBox="0 0 24 24"><rect y="3" width="24" height="18" rx="1" fill="#444"/><path d="M0 3h8v3H0z" fill="#ddd"/><path d="M8 3h8v3H8z" fill="#999"/><path d="M4 9l4 4-4 4" fill="none" stroke="#e0e0e0" stroke-width="2.500"/><path d="M11 17.500h7" stroke="#fff" stroke-width="2"/></svg></button>
    <button aria-label="XAMPP"><svg viewBox="0 0 24 24"><rect width="24" height="24" rx="2" fill="#fb7a24"/><path d="M5 7q3-3 7 1 4-4 7-1 1 3-2 5 3 2 2 5-3 3-7-1-4 4-7 1-1-3 2-5-3-2-2-5z" fill="none" stroke="#fff" stroke-width="3"/></svg></button>
    <button aria-label="PostgreSQL"><svg viewBox="0 0 24 24"><path d="M8 2Q1-1 .8 6q.5 8 3.200 10 2 1 4-2l1 1v2l3-1q0 7 3 7 3-1 3-6l4-1-2-2q4-6 3-10-3-4-8-2-4-1-7 0z" fill="#336791" stroke="#c3d5e2" stroke-width="1.200"/><path d="M8 2q-3 6 0 12M15 2q-3 5-1 9t1 5M18 15q-2-3-1-6" fill="none" stroke="#c3d5e2" stroke-width="1.200"/></svg></button>
    <button aria-label="SQL shell"><svg viewBox="0 0 24 24"><rect x="1" y="0" width="20" height="20" rx="3" fill="#a9b2ba"/><rect x="3" y="2" width="16" height="16" rx="1" fill="#205f8f"/><path d="M5 5l4 3-4 2M10 10h3" fill="none" stroke="#fff" stroke-width="1.500"/><circle cx="17" cy="17" r="5.800" fill="#161a16" stroke="#35a63b" stroke-width="2"/></svg></button>
    <button aria-label="IntelliJ"><svg viewBox="0 0 24 24"><path d="M0 10L6 5V2l4-2h14v10l-6 14H0z" fill="url(#jb)"/><path d="M4 4h16v16H4z" fill="#000"/><path d="M6.500 7h3M8 7v4.500M6.500 11.500h3M11.500 7h2v3.500q0 1-2 1M6 17.500h6" fill="none" stroke="#fff" stroke-width="1.300"/></svg></button>
    <button aria-label="Telegram"><svg viewBox="0 0 24 24"><circle cx="12" cy="12" r="11" fill="#1f97d4"/><path d="M5 12l13-5-2 11-4-3-2 2.500V14z" fill="#fff"/></svg></button>
    <div class="window-group">
      <button class="current" aria-label="Brave window"><svg viewBox="0 0 24 24"><use href="#shield"/><circle cx="18" cy="6" r="6" fill="#2fbf7a"/><path d="M13 9l8-8M15 12l9-9" stroke="#fff" stroke-width="2.200"/></svg><span class="dot"></span></button>
      <button aria-label="More apps"><svg viewBox="0 0 24 24" fill="#fff"><circle cx="4" cy="12" r="2"/><circle cx="12" cy="12" r="2"/><circle cx="20" cy="12" r="2"/></svg></button>
    </div>
  </div>
  <div class="tray">
    <button aria-label="Show hidden icons"><svg viewBox="0 0 24 24"><path d="M5 15l7-7 7 7" fill="none" stroke="#fff" stroke-width="2.200"/></svg></button>
    <button aria-label="Updates"><svg viewBox="0 0 24 24"><path d="M1 12C1 0 17-3 22 7M23 0v7.500h-7M9 16H2v7M2 17q4 7 11 6" fill="none" stroke="#fff" stroke-width="1.300"/><circle cx="18" cy="18" r="6" fill="#ff9a0a"/></svg></button>
    <button aria-label="Cloud storage"><svg viewBox="0 0 24 24"><path d="M5 20a6 6 0 0 1 0-11 8 8 0 0 1 14-1 6 6 0 0 1 0 12z" fill="#7e7e7e"/><path d="M2 2l20 20" stroke="#fff" stroke-width="1.500"/></svg></button>
    <div class="quick">
      <svg viewBox="0 0 24 24" fill="none" stroke="#fff" stroke-width="1.800"><path d="M1 9q11-10 22 0M4.500 13q7.500-7 15 0M8 16.500q4-4 8 0"/><circle cx="12" cy="18.500" r="2" fill="#fff" stroke="none"/></svg>
      <svg viewBox="0 0 24 24" fill="none" stroke="#fff" stroke-width="1.600"><path d="M1 9h4l6-5v16l-6-5H1zM14 9q2 3 0 6M17 6q4 6 0 12M20 3q6 9 0 18"/></svg>
      <svg viewBox="0 0 24 24" fill="none" stroke="#fff" stroke-width="1.800"><path d="M12 5h7q2 0 2 2v10q0 2-2 2H3"/><path d="M21 9h3v6h-3z" fill="#fff" stroke="none"/><path d="M7 0q5 6 4 11-2 5-6 5-6-4-5-9 5-2 7-7z" fill="#fff" stroke="none"/><path d="M1 20q6-4 6-11" stroke="#1c1c1c"/></svg>
    </div>
    <div class="clock"><span>8:52 PM</span><span>10/29/2025</span></div>
  </div>
</footer>
</body>
</html>
```
FILE: styles.css
```css
* { box-sizing: border-box; }

body {
  margin: 0;
  height: 100vh;
  display: flex;
  flex-direction: column;
  overflow: hidden;
  background: #fff;
  color: #000;
  font-family: Inter, "Liberation Sans", sans-serif;
}

button {
  border: 0;
  padding: 0;
  background: none;
  color: inherit;
  font: inherit;
  display: flex;
  align-items: center;
  justify-content: center;
}

svg { display: block; flex: none; }
.sprite { position: absolute; width: 0; height: 0; }
.mini-num { font: 700 8px Inter, sans-serif; fill: #fff; text-anchor: middle; }

/* Browser window */
.browser { flex: none; background: #1f1e23; }

.tabstrip { display: flex; align-items: center; height: 60px; }
.tabs { display: flex; }
.fluid { flex: 1; min-width: 0; padding-right: 2px; }
.tab { height: 24px; border-right: 1px solid #454449; }
.tab svg { width: 18px; height: 24px; }
.pinned .tab { width: 24px; padding-left: 2px; }
.fluid .tab { flex: 1; min-width: 0; }
.tab.last { border-color: transparent; }
.tab-active { width: 48px; height: 48px; border-radius: 12px; background: #3b3a3f; }
.tab-end { width: 27px; }
.new-tab { width: 54px; height: 48px; }
.window-buttons { display: flex; margin-left: 55px; }
.window-buttons button { width: 69px; height: 60px; }

.toolbar {
  display: flex;
  align-items: center;
  height: 62px;
  padding: 0 11px 0 10px;
  background: #3b3a3f;
  border-bottom: 2px solid #2f2e33;
  border-radius: 12px 12px 0 0;
}
.tool { width: 45px; height: 48px; }
.dim { opacity: .45; }
.line { fill: none; stroke: #f0f0f2; stroke-width: 2; stroke-linecap: round; stroke-linejoin: round; }
.white { fill: none; stroke: #f0f0f2; stroke-width: 1.800; stroke-linejoin: round; }
.soft { fill: none; stroke: #c4c3c8; stroke-width: 1.800; stroke-linejoin: round; }
.bookmark { margin: 0 12px 0 167px; }
.address {
  flex: 1;
  min-width: 0;
  display: flex;
  align-items: center;
  height: 48px;
  padding: 0 5px 0 14px;
  border-radius: 12px;
  background: #242328;
}
.url {
  flex: 1;
  min-width: 0;
  margin-left: 23px;
  padding: 0;
  border: 0;
  background: none;
  color: #e6e6ea;
  font: 20px "Open Sans", "Noto Sans", sans-serif;
}
.addr-tool { width: 51px; height: 48px; }
.addr-rule { width: 2px; height: 24px; background: #66656a; }
.side-tools { display: flex; align-items: center; margin-left: 112px; }
.tool-rule { width: 3px; height: 24px; margin: 0 12px; background: #242328; }

/* Application */
.app { position: relative; flex: 1; min-height: 0; display: flex; }

.sidebar {
  position: relative;
  z-index: 1;
  flex: none;
  width: 307px;
  display: flex;
  flex-direction: column;
  background: #fff;
  box-shadow: 0 12px 18px -4px rgba(0, 0, 0, .1), 0 5px 7px -5px rgba(0, 0, 0, .1);
}
.brand {
  height: 96px;
  display: flex;
  align-items: center;
  justify-content: center;
  padding-bottom: 2px;
  border-bottom: 1px solid #e5e7eb;
  font-size: 36px;
  font-weight: 700;
}
.menu { flex: 1; }
.menu a {
  display: flex;
  align-items: center;
  gap: 14px;
  height: 72px;
  padding: 0 0 1px 29px;
  color: #4b5563;
  font-size: 22px;
  font-weight: 500;
  text-decoration: none;
}
.icon {
  width: 29px;
  height: 29px;
  fill: none;
  stroke: currentColor;
  stroke-width: 2;
  stroke-linecap: round;
  stroke-linejoin: round;
}
.session { padding: 21px 38px; border-top: 1px solid #e5e7eb; }
.logout { gap: 14px; height: 58px; color: #ef4444; font-size: 22px; font-weight: 500; }

.content { flex: 1; min-width: 0; display: flex; flex-direction: column; }
.topbar {
  position: relative;
  flex: none;
  height: 96px;
  background: #fff;
  box-shadow: 0 5px 7px -1px rgba(0, 0, 0, .1), 0 2px 5px -2px rgba(0, 0, 0, .1);
}
.scroller { flex: 1; min-height: 0; display: flex; overflow: hidden; }
.page {
  flex: 1;
  min-width: 0;
  display: flex;
  flex-direction: column;
  align-items: center;
  padding: 55px 38px 0;
}
.scrollbar { flex: none; width: 9px; }
.thumb { height: 46%; margin-top: 1px; border-radius: 5px; background: #4b5563; }

h1, h2, p { margin: 0; }
h1 { font-size: 58px; line-height: 58px; font-weight: 800; }
.lead { margin-top: 19px; font-size: 24px; line-height: 34px; }
.card {
  flex: none;
  width: 100%;
  max-width: 806px;
  display: flex;
  flex-direction: column;
  align-items: center;
  margin-top: 58px;
  padding: 38px;
  border-radius: 14px;
  background: #fff;
  box-shadow: 0 24px 30px -6px rgba(0, 0, 0, .1), 0 10px 12px -7px rgba(0, 0, 0, .1);
}
.card-icon { width: 58px; height: 58px; fill: none; stroke: #000; stroke-width: 2; stroke-linecap: round; }
h2 { margin-top: 19px; font-size: 36px; line-height: 43px; font-weight: 700; }
.hint { margin-top: 10px; font-size: 19px; line-height: 29px; }
.fields { width: 100%; display: grid; grid-template-columns: 1fr 1fr; gap: 29px; margin-top: 38px; }
.field { display: flex; flex-direction: column; gap: 5px; min-width: 0; }
.field label { font-size: 17px; line-height: 24px; font-weight: 500; }
.field input, .field select {
  width: 100%;
  height: 59px;
  padding: 0 15px;
  border: 1px solid #d1d5db;
  border-radius: 10px;
  background: #fff;
  color: #000;
  font: 19px Inter, "Liberation Sans", sans-serif;
}
.field input::placeholder { color: #9ca3af; }
.field select {
  appearance: none;
  background: #fff url("data:image/svg+xml,%3Csvg xmlns='http://www.w3.org/2000/svg' width='12' height='8' fill='none' stroke='%23374151' stroke-width='2'%3E%3Cpath d='M1 1l5 5 5-5'/%3E%3C/svg%3E") no-repeat right 13px center;
}

.toast {
  position: absolute;
  z-index: 2;
  top: 19px;
  right: 19px;
  display: flex;
  align-items: center;
  gap: 12px;
  height: 54px;
  padding: 0 25px 0 12px;
  border-radius: 10px;
  background: #1e1e3c;
  color: #dcdcfa;
  font-size: 19px;
  box-shadow: 0 4px 12px rgba(0, 0, 0, .1), 0 4px 4px rgba(0, 0, 0, .05);
}

/* Taskbar */
.taskbar {
  position: relative;
  z-index: 3;
  flex: none;
  display: flex;
  height: 72px;
  border-top: 2px solid #3d3d3d;
  background: #1c1c1c;
  color: #fff;
}
.widget { position: relative; width: 96px; height: 70px; padding-top: 4px; }
.badge {
  position: absolute;
  top: 8px;
  left: 47px;
  width: 24px;
  height: 24px;
  border-radius: 12px;
  background: #ff99a4;
  color: #000;
  font: 16px/24px "Open Sans", "Noto Sans", sans-serif;
}
.apps { display: flex; margin-left: 122px; }
.apps button { position: relative; width: 48px; height: 68px; }
.apps svg, .tray svg { width: 24px; height: 24px; }
.running::after, .current::after {
  content: "";
  position: absolute;
  bottom: 4px;
  left: 21px;
  width: 6px;
  height: 5px;
  border-radius: 3px;
  background: #9a9a9a;
}
.window-group { display: flex; margin-left: 4px; padding: 0 2px; border: solid #9a9a9a; border-width: 0 2px; }
.window-group .current::before {
  content: "";
  position: absolute;
  z-index: -1;
  inset: 4px 3px;
  border: 1px solid #383838;
  border-radius: 6px;
  background: #2a2a2a;
}
.window-group .current::after { left: 16px; width: 16px; }
.dot {
  position: absolute;
  top: 16px;
  right: 9px;
  width: 6px;
  height: 6px;
  border-radius: 3px;
  background: #9a9a9a;
}
.tray { display: flex; margin-left: auto; padding-right: 29px; }
.tray button { width: 48px; height: 68px; }
.quick { display: flex; align-items: center; gap: 12px; height: 68px; padding: 0 22px 0 12px; }
.clock {
  display: flex;
  flex-direction: column;
  align-items: flex-end;
  padding-top: 9px;
  font: 18px/24px "Open Sans", "Noto Sans", sans-serif;
}
```
